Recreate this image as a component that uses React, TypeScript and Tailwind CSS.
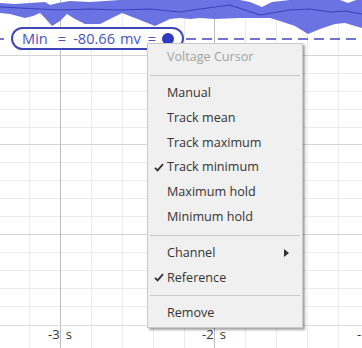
import React from 'react';

const minorX = [29, 91, 122, 153, 184, 245, 276, 307, 338];
const majorX = [60, 214];
const minorY = [73, 91, 109, 127, 162, 180, 198, 216, 252, 270, 288, 306];
const majorY = [55, 144, 234];

const bandTop = '0,3 15,4 30,3 45,2 50,5 58,3 70,1 90,2 120,0 240,0 250,2 262,7 272,2 290,0 340,0 348,3 356,0 362,0';
const bandBottom =
  '362,28 355,26 345,23 335,24 320,29 308,34 295,26 280,21 270,18 240,18 215,19 200,18 190,19 180,18 170,19 155,26 140,20 122,13 110,19 100,24 85,24 75,19 67,14 60,21 52,26 45,18 40,13 33,16 25,18 10,14 0,13';
const trace = '0,7 20,8 40,9 60,10 90,9 120,10 150,9 180,12 200,9 230,5 260,15 290,10 310,9 330,12 345,11 362,14';

const Chart = () => (
    <svg width="362" height="348" className="block">
        {minorX.map((x) => (
            <line key={x} x1={x + 0.5} y1={0} x2={x + 0.5} y2={348} stroke="#ebebeb" strokeWidth={1} />
        ))}
        {minorY.map((y) => (
            <line key={y} x1={0} y1={y + 0.5} x2={362} y2={y + 0.5} stroke="#ebebeb" strokeWidth={1} />
        ))}
        {majorY.map((y) => (
            <line key={y} x1={0} y1={y + 0.5} x2={362} y2={y + 0.5} stroke="#d4d4d4" strokeWidth={1} />
        ))}
        {majorX.map((x) => (
            <line key={x} x1={x + 0.5} y1={0} x2={x + 0.5} y2={348} stroke="#bdbdbd" strokeWidth={1} />
        ))}
        <line x1={0} y1={325.5} x2={362} y2={325.5} stroke="#dcdcdc" strokeWidth={1} />
        <polygon points={`${bandTop} ${bandBottom}`} fill="#6b72e2" />
        <polyline points={trace} fill="none" stroke="#3a43bd" strokeWidth={1.2} />
        <line x1={0} y1={39} x2={4} y2={39} stroke="#3f47b8" strokeWidth={1.5} />
        <line x1={186} y1={39} x2={362} y2={39} stroke="#3f47b8" strokeWidth={1.5} strokeDasharray="10 6" />
    </svg>
);

const Check = () => (
    <svg width="10" height="9" viewBox="0 0 10 9">
        <path d="M1 4.8 L3.6 7.4 L9 1.2" fill="none" stroke="#333" strokeWidth={1.8} />
    </svg>
);

const Item = ({ label, checked = false, sub = false }) => (
    <div className="flex items-center h-[24.8px]">
        <span className="w-[19px] flex justify-center pl-[2px]">{checked && <Check />}</span>
        <span className="flex-1 text-[#333]">{label}</span>
        {sub && (
            <svg width="5" height="8" viewBox="0 0 5 8" className="mr-[13px]">
                <path d="M0 0 L5 4 L0 8 Z" fill="#333" />
            </svg>
        )}
    </div>
);

const Separator = () => (
    <div className="py-[5px] px-[2px]">
        <div className="h-px bg-[#c8c8c8]" />
    </div>
);

const ContextMenu = () => (
    <div className="absolute left-[147px] top-[43px] w-[156px] bg-[#f0f0f0] border border-[#c9c9c9] shadow-[2px_2px_2px_rgba(0,0,0,0.35)] text-[12.6px] pb-[1px]">
        <div className="flex items-center h-[26px]">
            <span className="w-[19px]" />
            <span className="text-[#a3a3a3]">Voltage Cursor</span>
        </div>
        <Separator />
        <Item label="Manual" />
        <Item label="Track mean" />
        <Item label="Track maximum" />
        <Item label="Track minimum" checked />
        <Item label="Maximum hold" />
        <Item label="Minimum hold" />
        <Separator />
        <Item label="Channel" sub />
        <Item label="Reference" checked />
        <Separator />
        <Item label="Remove" />
    </div>
);

const AxisLabel = ({ num, left }) => (
    <div className={`absolute top-[325px] flex text-[13px] text-[#333] ${left}`}>
        <span>{num}</span>
        <span className="ml-[6px]">s</span>
    </div>
);

export default function App() {
    return (
        <div
            className="relative w-[362px] h-[348px] bg-white overflow-hidden"
            style={{ fontFamily: '"Open Sans", "Noto Sans", sans-serif' }}
        >
            <Chart />
            <AxisLabel num="-3" left="left-[48px]" />
            <AxisLabel num="-2" left="left-[202px]" />
            <span className="absolute left-[357px] top-[325px] text-[13px] text-[#333]">-</span>

            <div className="absolute left-[11px] top-[27px] h-[23px] w-[173px] rounded-full border-2 border-[#3f47b8] bg-white flex items-center pl-[9px] text-[14.6px] text-[#4a52c2] whitespace-pre">
                <span>Min</span>
                <span className="ml-[10px]">=</span>
                <span className="ml-[7px]">-80.66</span>
                <span className="ml-[5px]">mv</span>
                <span className="ml-[7px]">=</span>
                <span className="ml-[6px] w-[12px] h-[12px] rounded-full bg-[#2f38c0]" />
            </div>

            <ContextMenu />
        </div>
    );
}
